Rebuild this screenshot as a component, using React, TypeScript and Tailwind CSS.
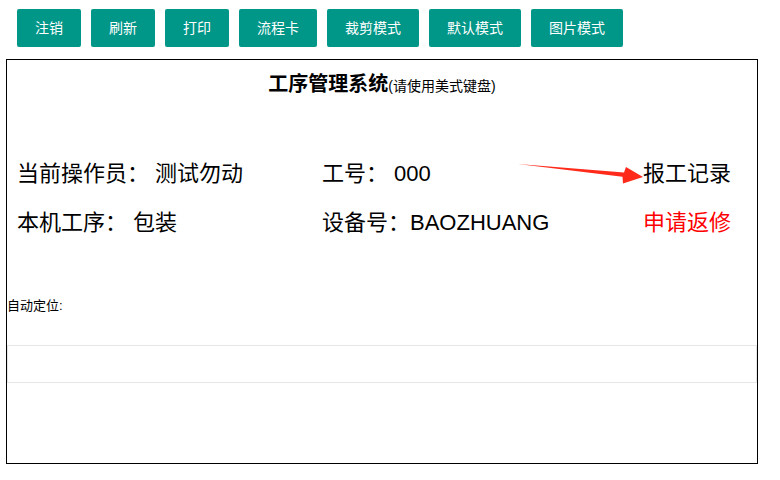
import React from "react";

const TOOLBAR_BUTTONS = ["注销", "刷新", "打印", "流程卡", "裁剪模式", "默认模式", "图片模式"];

const FONT = "font-['Liberation_Sans','Noto_Sans_CJK_SC',sans-serif]";

const ToolbarButton: React.FC<{ label: string }> = ({ label }) => (
  <button
    type="button"
    className="h-[38px] rounded-[2px] bg-[#009688] px-[18px] text-[14px] leading-[38px] text-white"
  >
    {label}
  </button>
);

// the red hand-drawn arrow that points at 报工记录
const PointerArrow: React.FC = () => (
  <svg
    className="pointer-events-none absolute left-0 top-0"
    width="780"
    height="480"
    viewBox="0 0 780 480"
  >
    <polygon
      points="518,164 624,172.4 626,167 643,177 623,183.5 622.5,176.8"
      fill="#ff2a1a"
    />
  </svg>
);

const App: React.FC = () => {
  return (
    <div className={`relative h-[480px] w-[780px] bg-white text-black ${FONT}`}>
      <div className="flex gap-[10px] pl-[17px] pt-[9px]">
        {TOOLBAR_BUTTONS.map((label) => (
          <ToolbarButton key={label} label={label} />
        ))}
      </div>

      <div className="ml-[6px] mt-[12px] h-[405px] w-[752px] border border-black">
        <div className="pt-[10px] text-center leading-[28px]">
          <span className="text-[20px] font-bold">工序管理系统</span>
          <span className="text-[14px]">(请使用美式键盘)</span>
        </div>

        <div className="mt-[49px] grid grid-cols-[305px_1fr_auto] pl-[10px] pr-[26px] text-[22px]">
          <div className="flex h-[49px] items-center">当前操作员： 测试勿动</div>
          <div className="flex h-[49px] items-center">工号： 000</div>
          <div className="flex h-[49px] items-center justify-end">报工记录</div>
          <div className="flex h-[49px] items-center">本机工序： 包装</div>
          <div className="flex h-[49px] items-center">设备号：BAOZHUANG</div>
          <div className="flex h-[49px] items-center justify-end text-[#ff0000]">申请返修</div>
        </div>

        <div className="mt-[49px] text-[13px] leading-[20px]">自动定位:</div>

        <div className="mt-[29px] h-[38px] border border-[#e6e6e6]" />
      </div>

      <PointerArrow />
    </div>
  );
};

export default App;
